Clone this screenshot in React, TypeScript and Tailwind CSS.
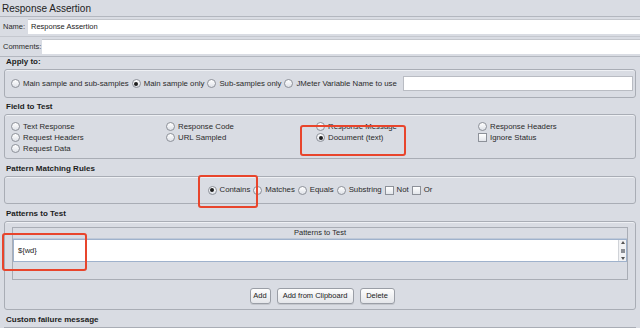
import React from "react";

const Radio = ({ checked = false }: { checked?: boolean }) => (
  <span className="inline-flex items-center justify-center w-[9px] h-[9px] rounded-full border border-[#8d9199] bg-gradient-to-b from-[#ffffff] to-[#dfe2e8] shrink-0">
    {checked && <span className="w-[4px] h-[4px] rounded-full bg-[#1e1e1e]" />}
  </span>
);

const Check = () => (
  <span className="inline-block w-[9px] h-[9px] border border-[#8d9199] bg-gradient-to-b from-[#ffffff] to-[#e3e6eb] shrink-0" />
);

const Opt = ({
  label,
  checked,
  box,
}: {
  label: string;
  checked?: boolean;
  box?: boolean;
}) => (
  <span className="inline-flex items-center gap-[3px] whitespace-nowrap">
    {box ? <Check /> : <Radio checked={checked} />}
    <span>{label}</span>
  </span>
);

const Header = ({ title, className }: { title: string; className: string }) => (
  <div className={`flex items-end pl-[6px] pb-[1px] font-bold text-[8px] text-[#1c1c1c] ${className}`}>
    {title}
  </div>
);

const Box = ({
  className,
  children,
}: {
  className: string;
  children?: React.ReactNode;
}) => (
  <div
    className={`mx-[4px] rounded-[3px] border border-[#a9adb5] shadow-[inset_0_1px_0_#eef0f4] bg-[#d9dce3] ${className}`}
  >
    {children}
  </div>
);

const Button = ({ label, w }: { label: string; w: string }) => (
  <button
    className={`${w} h-[16px] whitespace-nowrap rounded-[3px] border border-[#9a9ea6] bg-gradient-to-b from-[#fdfdfd] to-[#e4e6ea] text-[7.5px] text-[#222] flex items-center justify-center shadow-[0_1px_0_#c4c7cd]`}
  >
    {label}
  </button>
);

export default function App() {
  return (
    <div className="relative w-[640px] h-[328px] overflow-hidden bg-[#d9dce3] text-[7.8px] text-[#2a2a2a] font-['Liberation_Sans',Arial,sans-serif]">
      <div className="h-[17px] pl-[2px] flex items-center text-[10px] text-[#222] border-b border-[#b3b7bf]">
        Response Assertion
      </div>

      <div className="h-[20px] flex items-center pl-[3px] border-b border-[#c5c8cf] text-[7.5px]">
        <span className="w-[25px] shrink-0">Name:</span>
        <div className="flex-1 h-[15px] bg-white border-t border-[#c3c6cc] flex items-center pl-[3px] text-[#222]">
          Response Assertion
        </div>
      </div>
      <div className="h-[20px] flex items-center pl-[3px] border-b border-[#b3b7bf] text-[7.5px]">
        <span className="w-[39px] shrink-0">Comments:</span>
        <div className="flex-1 h-[15px] bg-white border-t border-[#c3c6cc]" />
      </div>

      <Header title="Apply to:" className="h-[12px]" />
      <Box className="h-[29px] flex items-center pl-[6px] pr-[2px] gap-[3px]">
        <Opt label="Main sample and sub-samples" />
        <Opt label="Main sample only" checked />
        <Opt label="Sub-samples only" />
        <Opt label="JMeter Variable Name to use" />
        <div className="ml-[3px] flex-1 h-[15px] bg-white border border-[#b9bcc3]" />
      </Box>

      <Header title="Field to Test" className="h-[16px]" />
      <Box className="h-[45px] pl-[6px] pt-[6px] grid grid-cols-[155px_150px_162px_1fr] auto-rows-[11px] items-center">
        <Opt label="Text Response" />
        <Opt label="Response Code" />
        <Opt label="Response Message" />
        <Opt label="Response Headers" />
        <Opt label="Request Headers" />
        <Opt label="URL Sampled" />
        <Opt label="Document (text)" checked />
        <Opt label="Ignore Status" box />
        <Opt label="Request Data" />
      </Box>

      <Header title="Pattern Matching Rules" className="h-[17px]" />
      <Box className="h-[28px] flex items-center justify-center gap-[3px]">
        <Opt label="Contains" checked />
        <Opt label="Matches" />
        <Opt label="Equals" />
        <Opt label="Substring" />
        <Opt label="Not" box />
        <Opt label="Or" box />
      </Box>

      <Header title="Patterns to Test" className="h-[17px]" />
      <Box className="h-[89px] px-[7px] pt-[5px] flex flex-col">
        <div className="h-[53px] border border-[#a9adb5] flex flex-col">
          <div className="h-[11px] flex items-center justify-center text-[7.5px] border-b border-[#bfc9d8]">
            Patterns to Test
          </div>
          <div className="h-[23px] bg-white border border-[#9fb2cc] flex">
            <div className="flex-1 pl-[4px] flex items-center text-[7.5px] text-[#222]">
              {"${wd}"}
            </div>
            <div className="w-[8px] flex flex-col items-center justify-between py-[1px] border-l border-[#d0d3d8] bg-[#f1f2f4]">
              <span className="w-0 h-0 border-x-[2px] border-x-transparent border-b-[3px] border-b-[#555]" />
              <span className="w-[4px] h-[4px] bg-[#8c8f95]" />
              <span className="w-0 h-0 border-x-[2px] border-x-transparent border-t-[3px] border-t-[#555]" />
            </div>
          </div>
        </div>
        <div className="mt-[8px] flex justify-center gap-[6px] pl-[4px]">
          <Button label="Add" w="w-[21px]" />
          <Button label="Add from Clipboard" w="w-[77px]" />
          <Button label="Delete" w="w-[35px]" />
        </div>
      </Box>

      <Header title="Custom failure message" className="h-[17px]" />
      <div className="mx-[4px] h-[4px] border-t border-[#a9adb5]" />

      {/* red annotation boxes */}
      <div className="absolute left-[300px] top-[125px] w-[106px] h-[31px] rounded-[3px] border-2 border-[#e8452c]" />
      <div className="absolute left-[198px] top-[175px] w-[60px] h-[33px] rounded-[3px] border-2 border-[#e8452c]" />
      <div className="absolute left-[2px] top-[233px] w-[85px] h-[38px] rounded-[3px] border-2 border-[#e8452c]" />
    </div>
  );
}
